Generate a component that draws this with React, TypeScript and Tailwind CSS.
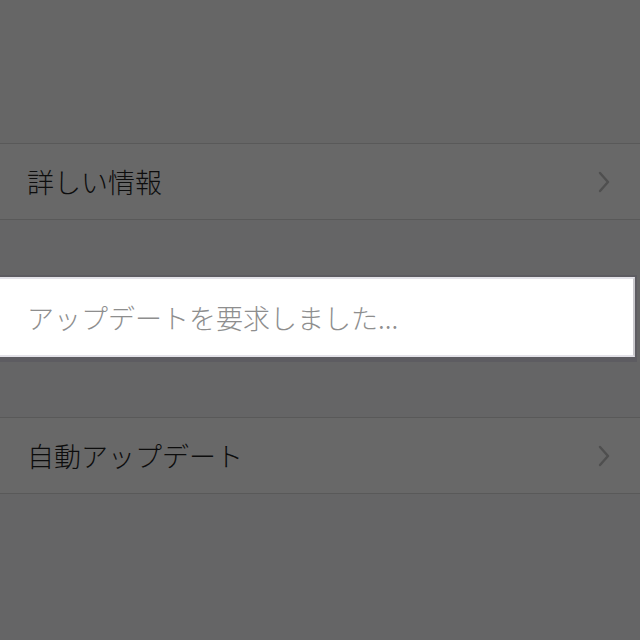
import React from "react";

const Chevron = () => (
  <svg width="14" height="24" viewBox="0 0 14 24" className="shrink-0">
    <path d="M3 3 L11 12 L3 21" fill="none" stroke="#4f4f4f" strokeWidth="2.4" strokeLinecap="round" strokeLinejoin="round" />
  </svg>
);

const Row = ({ label }: { label: string }) => (
  <div className="flex items-center justify-between h-[77px] bg-[#686868] border-y border-[#595959] pl-[27px] pr-[29px]">
    <span className="text-[27px] font-light text-[#0d0d0d] leading-none">{label}</span>
    <Chevron />
  </div>
);

export default function App() {
  return (
    <div
      className="w-[640px] h-[640px] bg-[#656566] overflow-hidden flex flex-col"
      style={{ fontFamily: '"Noto Sans CJK JP", "Noto Sans", sans-serif' }}
    >
      <div className="h-[143px] bg-[#666666]" />
      <Row label="詳しい情報" />
      <div className="h-[55px]" />
      <div className="h-[87px] w-[637px] bg-[#5d5c61] flex flex-col pt-[2px] pr-[2px] pb-[5px]">
        <div className="flex-1 bg-white border-y-2 border-[#e3e2e8] border-r-2 border-r-[#c9c8cc] flex items-center pl-[27px]">
          <span className="text-[27px] font-light text-[#8e8e8e] leading-none">アップデートを要求しました...</span>
        </div>
      </div>
      <div className="h-[55px]" />
      <Row label="自動アップデート" />
    </div>
  );
}
